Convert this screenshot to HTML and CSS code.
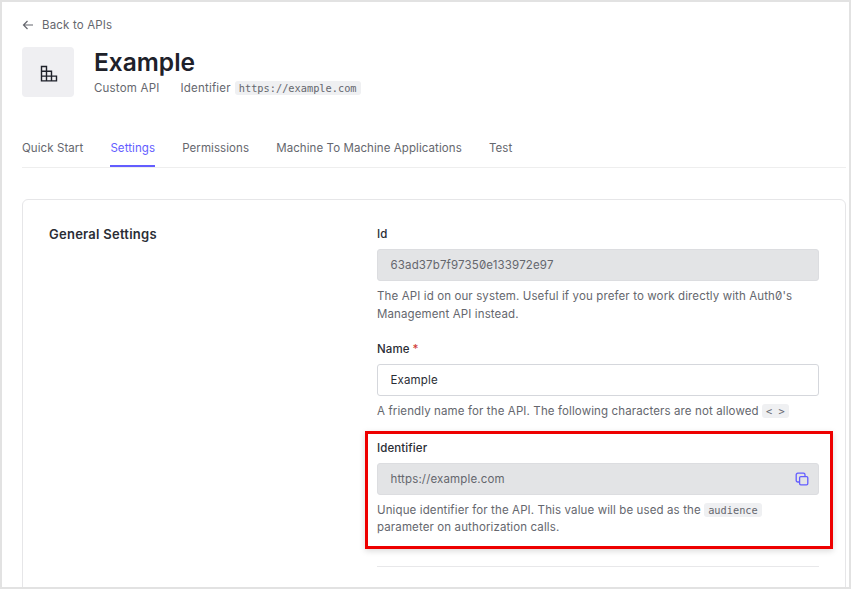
FILE: index.html
```html
<!DOCTYPE html>
<html lang="en">

<head>
  <meta charset="UTF-8">
  <meta name="viewport" content="width=device-width, initial-scale=1.0">
  <title>Example</title>
  <link rel="stylesheet" href="styles.css">
</head>

<body>
  <div class="frame">
    <a class="back" href="#">
      <svg width="12" height="12" viewBox="0 0 12 12" fill="none" stroke="#65676e" stroke-width="1.2">
        <path d="M11 6H1.5M5.5 2L1.5 6l4 4" />
      </svg>
      Back to APIs
    </a>

    <header class="head">
      <div class="logo">
        <svg width="20" height="20" viewBox="0 0 20 20" fill="none" stroke="#1e212a" stroke-width="1.4">
          <path d="M3.5 4.5h5v14.4h-5zM3.5 9.3h10v9.6M3.5 14.1h15v4.8H3.5" />
        </svg>
      </div>
      <div>
        <h1>Example</h1>
        <p class="meta">
          <span class="type">Custom API</span>
          <span>Identifier</span>
          <code class="tag">https://example.com</code>
        </p>
      </div>
    </header>

    <nav class="tabs">
      <a href="#">Quick Start</a>
      <a href="#" class="active">Settings</a>
      <a href="#">Permissions</a>
      <a href="#">Machine To Machine Applications</a>
      <a href="#">Test</a>
    </nav>

    <section class="card">
      <h2>General Settings</h2>
      <form class="fields">
        <div class="field field-id">
          <label>Id</label>
          <div class="input locked">63ad37b7f97350e133972e97</div>
          <p class="help">The API id on our system. Useful if you prefer to work directly with Auth0's Management API instead.</p>
        </div>
        <div class="field field-name">
          <label>Name<span class="req">*</span></label>
          <div class="input">Example</div>
          <p class="help">A friendly name for the API. The following characters are not allowed <code class="tag inline">&lt; &gt;</code></p>
        </div>
        <div class="field">
          <label>Identifier</label>
          <div class="input locked">
            https://example.com
            <svg class="copy" width="14" height="14" viewBox="0 0 14 14" fill="none" stroke="#635dff" stroke-width="1.3">
              <path d="M4 10H2.8A1.6 1.6 0 0 1 1.2 8.4V2.8A1.6 1.6 0 0 1 2.8 1.2h5.6A1.6 1.6 0 0 1 10 2.8V4" />
              <rect x="4.6" y="4.6" width="8.2" height="8.2" rx="1.2" />
            </svg>
          </div>
          <p class="help">Unique identifier for the API. This value will be used as the <code class="tag inline">audience</code> parameter on authorization calls.</p>
        </div>
        <hr class="rule">
      </form>
    </section>

    <div class="highlight"></div>
  </div>
</body>

</html>
```

FILE: styles.css
```css
* {
  box-sizing: border-box;
  margin: 0;
  padding: 0;
}

body {
  font-family: Inter, "Liberation Sans", sans-serif;
  font-feature-settings: "zero";
  color: #65676e;
  background-color: #fff;
}

a {
  color: inherit;
  text-decoration: none;
}

.frame {
  position: relative;
  height: 589px;
  overflow: hidden;
  border: 2px solid #e2e2e2;
  padding: 15px 3px 0 20px;
}

.back {
  display: flex;
  align-items: center;
  gap: 8px;
  height: 16px;
  font-size: 11.5px;
  letter-spacing: 0.17px;
}

.head {
  display: flex;
  gap: 20px;
  margin-top: 14px;
}

.logo {
  width: 52px;
  height: 50px;
  border-radius: 4px;
  background-color: #efeff2;
  display: flex;
  justify-content: center;
  align-items: center;
}

h1 {
  font-size: 24.5px;
  font-weight: 600;
  line-height: 30px;
  color: #1e212a;
}

.meta {
  display: flex;
  align-items: center;
  margin-top: 4px;
  font-size: 11.5px;
  letter-spacing: 0.2px;
}

.type {
  margin-right: 21px;
}

.tag {
  font-family: "DejaVu Sans Mono", "Liberation Mono", monospace;
  font-size: 10.3px;
  letter-spacing: 0;
  padding: 1px 4px;
  margin-left: 4px;
  border-radius: 3px;
  background-color: #eff0f2;
}

.inline {
  margin-left: 0;
}

.tabs {
  display: flex;
  gap: 27.1px;
  margin-top: 30px;
  height: 41px;
  border-bottom: 1px solid #eeeeee;
  font-size: 11.5px;
  letter-spacing: 0.08px;
}

.tabs a {
  padding-top: 14px;
  height: 40px;
}

.tabs .active {
  color: #635dff;
  border-bottom: 2px solid #635dff;
}

.card {
  display: grid;
  grid-template-columns: 328px 442px;
  margin-top: 31px;
  height: 420px;
  padding: 26px 26px 0;
  border: 1px solid #e6e6e8;
  border-radius: 6px;
}

h2 {
  font-size: 13px;
  font-weight: 600;
  line-height: 16px;
  letter-spacing: 0.25px;
  color: #2a2d35;
}

.field {
  margin-bottom: 17px;
}

.field-id {
  margin-bottom: 18px;
}

.field-name {
  margin-bottom: 19px;
}

label {
  display: block;
  padding-top: 1px;
  font-size: 11.5px;
  font-weight: 500;
  line-height: 15px;
  letter-spacing: 0.1px;
  color: #2a2d35;
}

.req {
  margin-left: 3px;
  color: #d03c38;
}

.input {
  display: flex;
  align-items: center;
  justify-content: space-between;
  height: 32px;
  margin-top: 7px;
  padding: 0 9px 0 12.5px;
  border: 1px solid #d5d7dc;
  border-radius: 3px;
  font-size: 11.5px;
  letter-spacing: 0.15px;
  color: #2a2d35;
}

.locked {
  background-color: #e3e4e6;
  border-color: #dcdde0;
  color: #65676e;
}

.help {
  margin-top: 7px;
  font-size: 11.5px;
  line-height: 17.5px;
  letter-spacing: 0.12px;
}

.rule {
  border: 0;
  border-top: 1px solid #e8e8ea;
  margin-top: 29px;
}

/* callout drawn over the screenshot */
.highlight {
  position: absolute;
  left: 363px;
  top: 429px;
  width: 468px;
  height: 118px;
  border: 3px solid #ee0000;
  box-shadow: 0 2px 6px rgba(0, 0, 0, 0.15);
}
```
